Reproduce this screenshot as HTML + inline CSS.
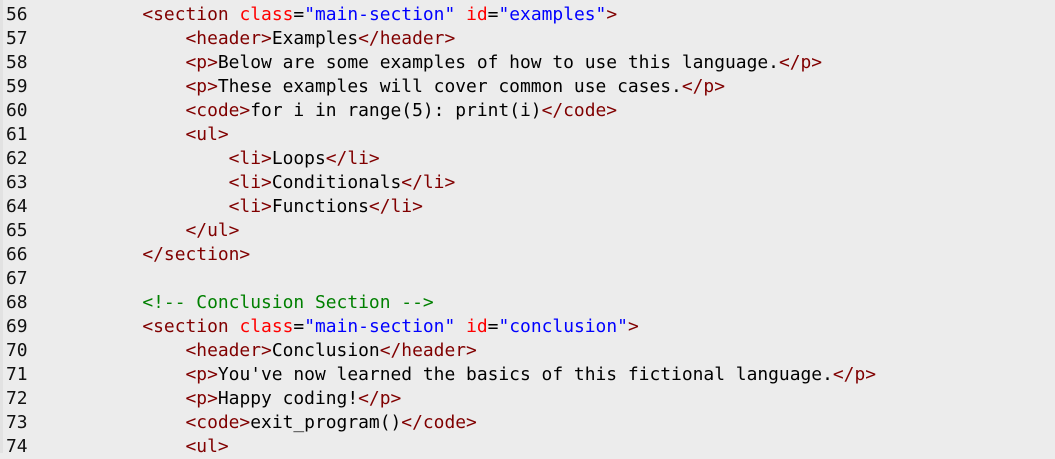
<!DOCTYPE html>
<html><head><style>
body{margin:0;width:1055px;height:453px;overflow:hidden;background:#ececec;font-family:"DejaVu Sans Mono","Liberation Mono",monospace;font-size:17.93px}
.ln{position:absolute;left:6px;color:#111}
.c{position:absolute;left:56px;white-space:pre;color:#000}
.t{color:#800000}.a{color:#f00}.v{color:#00f}.m{color:#008000}
.row{position:absolute;left:0;height:24px;line-height:24px;width:1055px}
</style></head><body>
<div style="position:absolute;left:0;top:0;width:3px;height:453px;background:#e2e2e2"></div>
<div class="row" style="top:-21px"><span class="c">            <span class="v" style="color:#0aa">'</span></span></div>
<div class="row" style="top:3px"><span class="ln">56</span><span class="c">        <span class="t">&lt;section</span> <span class="a">class</span>=<span class="v">"main-section"</span> <span class="a">id</span>=<span class="v">"examples"</span><span class="t">&gt;</span></span></div>
<div class="row" style="top:27px"><span class="ln">57</span><span class="c">            <span class="t">&lt;header&gt;</span>Examples<span class="t">&lt;/header&gt;</span></span></div>
<div class="row" style="top:51px"><span class="ln">58</span><span class="c">            <span class="t">&lt;p&gt;</span>Below are some examples of how to use this language.<span class="t">&lt;/p&gt;</span></span></div>
<div class="row" style="top:75px"><span class="ln">59</span><span class="c">            <span class="t">&lt;p&gt;</span>These examples will cover common use cases.<span class="t">&lt;/p&gt;</span></span></div>
<div class="row" style="top:99px"><span class="ln">60</span><span class="c">            <span class="t">&lt;code&gt;</span>for i in range(5): print(i)<span class="t">&lt;/code&gt;</span></span></div>
<div class="row" style="top:123px"><span class="ln">61</span><span class="c">            <span class="t">&lt;ul&gt;</span></span></div>
<div class="row" style="top:147px"><span class="ln">62</span><span class="c">                <span class="t">&lt;li&gt;</span>Loops<span class="t">&lt;/li&gt;</span></span></div>
<div class="row" style="top:171px"><span class="ln">63</span><span class="c">                <span class="t">&lt;li&gt;</span>Conditionals<span class="t">&lt;/li&gt;</span></span></div>
<div class="row" style="top:195px"><span class="ln">64</span><span class="c">                <span class="t">&lt;li&gt;</span>Functions<span class="t">&lt;/li&gt;</span></span></div>
<div class="row" style="top:219px"><span class="ln">65</span><span class="c">            <span class="t">&lt;/ul&gt;</span></span></div>
<div class="row" style="top:243px"><span class="ln">66</span><span class="c">        <span class="t">&lt;/section&gt;</span></span></div>
<div class="row" style="top:267px"><span class="ln">67</span></div>
<div class="row" style="top:291px"><span class="ln">68</span><span class="c">        <span class="m">&lt;!-- Conclusion Section --&gt;</span></span></div>
<div class="row" style="top:315px"><span class="ln">69</span><span class="c">        <span class="t">&lt;section</span> <span class="a">class</span>=<span class="v">"main-section"</span> <span class="a">id</span>=<span class="v">"conclusion"</span><span class="t">&gt;</span></span></div>
<div class="row" style="top:339px"><span class="ln">70</span><span class="c">            <span class="t">&lt;header&gt;</span>Conclusion<span class="t">&lt;/header&gt;</span></span></div>
<div class="row" style="top:363px"><span class="ln">71</span><span class="c">            <span class="t">&lt;p&gt;</span>You've now learned the basics of this fictional language.<span class="t">&lt;/p&gt;</span></span></div>
<div class="row" style="top:387px"><span class="ln">72</span><span class="c">            <span class="t">&lt;p&gt;</span>Happy coding!<span class="t">&lt;/p&gt;</span></span></div>
<div class="row" style="top:411px"><span class="ln">73</span><span class="c">            <span class="t">&lt;code&gt;</span>exit_program()<span class="t">&lt;/code&gt;</span></span></div>
<div class="row" style="top:435px"><span class="ln">74</span><span class="c">            <span class="t">&lt;ul&gt;</span></span></div>
</body></html>
